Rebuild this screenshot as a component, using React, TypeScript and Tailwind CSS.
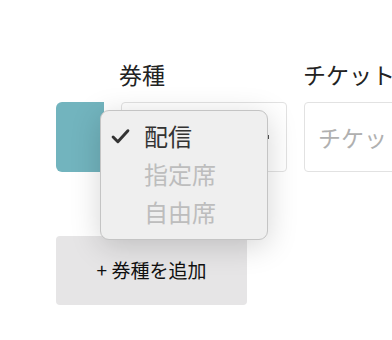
import React from "react";

export default function App() {
  const font = { fontFamily: '"Noto Sans CJK JP", "Noto Sans", sans-serif' };
  return (
    <div className="w-[392px] h-[340px] bg-white overflow-hidden relative" style={font}>
      <div className="pt-[58px] pl-[56px]">
        <div className="flex">
          <div className="w-[48px] shrink-0" />
          <div className="ml-[15px] w-[168px] shrink-0 text-[23px] leading-[32px] text-[#222]">券種</div>
          <div className="ml-[16px] shrink-0 text-[23px] leading-[32px] text-[#222] whitespace-nowrap">チケット名</div>
        </div>
        <div className="flex mt-[12px]">
          <div className="w-[48px] h-[70px] shrink-0 rounded-l-[6px] bg-[#72b4be]" />
          <div className="ml-[17px] w-[166px] h-[70px] shrink-0 rounded-[4px] border border-[#e2e2e2] bg-white relative">
            <div className="absolute right-[17px] top-[32px] w-[2px] h-[4px] bg-[#555]" />
          </div>
          <div className="ml-[17px] w-[200px] h-[70px] shrink-0 rounded-[4px] border border-[#e2e2e2] bg-white flex items-center pl-[13px] text-[23px] text-[#b0b0b0] whitespace-nowrap">
            チケット名
          </div>
        </div>
        <button className="mt-[64px] w-[191px] h-[69px] rounded-[4px] bg-[#e6e5e6] flex items-center justify-center text-[19px] text-[#111]">
          +&nbsp;券種を追加
        </button>
      </div>
      <div className="absolute left-[100px] top-[110px] w-[168px] h-[130px] rounded-[9px] border border-[#c4c4c4] bg-[#efefef] shadow-[0_6px_30px_rgba(0,0,0,0.17)] pt-[6px]">
        <div className="flex items-center h-[38px]">
          <svg className="ml-[10px] w-[19px] h-[19px]" viewBox="0 0 18 18">
            <path d="M2 9.5 L6.5 14 L16 3.5" fill="none" stroke="#333" strokeWidth="2.8" strokeLinecap="round" strokeLinejoin="round" />
          </svg>
          <span className="ml-[14px] text-[24px] text-[#333]">配信</span>
        </div>
        <div className="flex items-center h-[38px] pl-[43px] text-[24px] text-[#bdbdbd]">指定席</div>
        <div className="flex items-center h-[37px] pl-[43px] text-[24px] text-[#bdbdbd]">自由席</div>
      </div>
    </div>
  );
}
